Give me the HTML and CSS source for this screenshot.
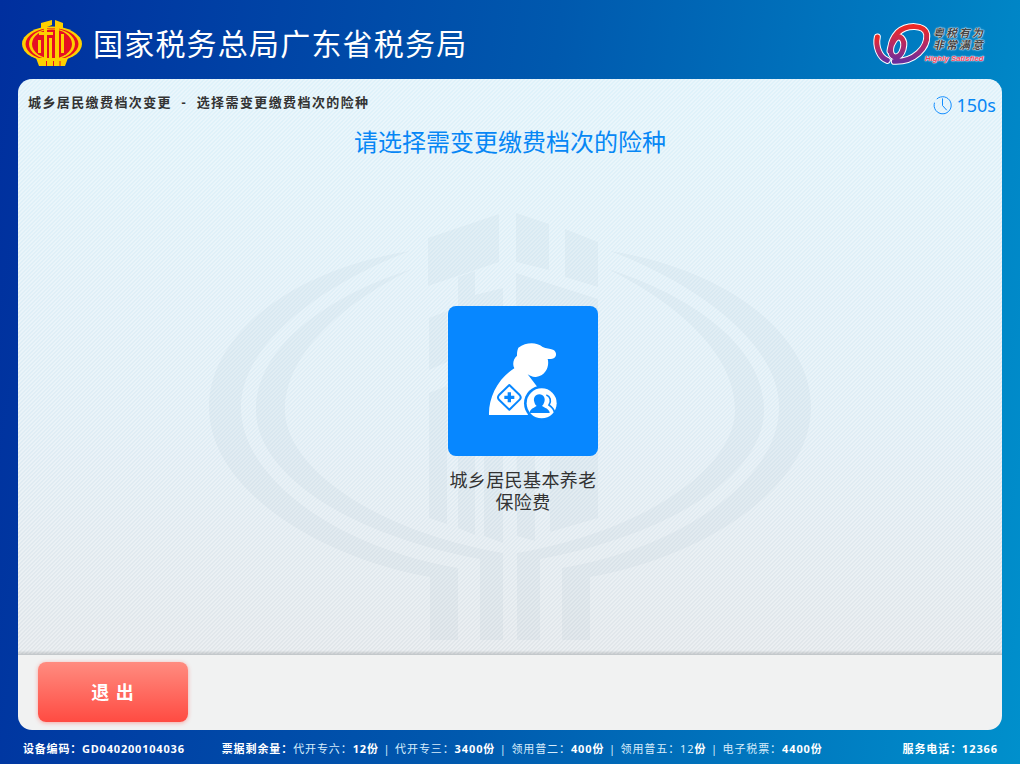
FILE: index.html
```html
<!DOCTYPE html>
<html lang="zh-CN">
<head>
    <meta charset="UTF-8">
    <title>国家税务总局广东省税务局</title>
    <link rel="stylesheet" href="styles.css">
</head>
<body>
    <div class="header">
        <svg class="emblem" viewBox="0 0 60 46">
            <ellipse cx="30" cy="24" rx="30" ry="17.5" fill="#fdd000"/>
            <ellipse cx="30" cy="24" rx="26.5" ry="16" fill="#e60f23"/>
            <ellipse cx="30" cy="24" rx="23" ry="15.5" fill="#fdd000"/>
            <ellipse cx="30" cy="24" rx="20" ry="14.5" fill="#e60f23"/>
            <path d="M14 38H46L43 46H17Z" fill="#fdd000"/>
            <path d="M19 3L30 0V5L25 7V12H31V15H25V42H22V15H17V12H22V8L19 9Z" fill="#fdd000"/>
            <path d="M33 0L41 3V9L37 8V42H33Z" fill="#fdd000"/>
            <path d="M27 18H30V42H27ZM39 14H42V33H39ZM16 20H19V33H16Z" fill="#fdd000"/>
            <path d="M24.5 41V46M31.5 41V46M38 41V46" stroke="#e60f23" stroke-width="1"/>
        </svg>
        <h1 class="org-name">国家税务总局广东省税务局</h1>
        <div class="slogan">
            <svg class="slogan-mark" viewBox="155 60 180 135">
                <defs>
                    <linearGradient id="swirl" x1="0" y1="0" x2="0" y2="1">
                        <stop offset="0" stop-color="#ee2a24"/>
                        <stop offset="0.55" stop-color="#b02a6a"/>
                        <stop offset="1" stop-color="#6a2d9c"/>
                    </linearGradient>
                </defs>
                <g fill="none" stroke="#fff" stroke-width="21" stroke-linecap="round">
                    <path d="M174 108C168 135 180 170 204 178"/>
                    <path d="M225 181C285 183 326 140 322 100C316 70 262 70 235 95C212 120 205 165 228 168C250 168 262 125 245 110C232 100 215 125 212 150"/>
                </g>
                <g fill="none" stroke="url(#swirl)" stroke-width="15" stroke-linecap="round">
                    <path d="M174 108C168 135 180 170 204 178"/>
                    <path d="M225 181C285 183 326 140 322 100C316 70 262 70 235 95C212 120 205 165 228 168C250 168 262 125 245 110C232 100 215 125 212 150"/>
                </g>
            </svg>
            <div class="slogan-text">
                <span>粤税有为</span>
                <span>非常满意</span>
                <em>Highly Satisfied</em>
            </div>
        </div>
    </div>

    <div class="panel">
        <div class="content">
            <svg class="watermark" viewBox="0 0 1020 764">
                <!-- rings -->
                <path d="M410 251C300 268 209 330 209 407C209 490 320 558 430 577V640H458V568C340 548 241 480 241 407C241 345 320 285 410 251Z"/>
                <path d="M412 269C330 295 256 345 256 410C256 475 350 535 480 559V640H503V553C370 530 285 465 285 410C285 355 340 305 412 269Z"/>
                <path d="M610 251C720 268 811 330 811 407C811 490 700 558 590 577V640H562V568C680 548 779 480 779 407C779 345 700 285 610 251Z"/>
                <path d="M608 269C690 295 764 345 764 410C764 475 670 535 540 559V640H517V553C650 530 735 465 735 410C735 355 680 305 608 269Z"/>
                <!-- character -->
                <path d="M428 238L499 214V262L428 286Z"/>
                <path d="M458 277L475 271V295L503 288V543L484 536V320L475 325V535L458 528Z"/>
                <path d="M429 393L447 386V524L429 518Z"/>
                <path d="M429 318L447 311V362L429 370Z"/>
                <path d="M516 213L549 224V270L516 262Z"/>
                <path d="M565 229L598 242V287L565 277Z"/>
                <path d="M516 273L598 299V518L550 532V456H535V541L517 536Z"/>
            </svg>
            <div class="top-row">
                <div class="crumb">城乡居民缴费档次变更&nbsp; -&nbsp; 选择需变更缴费档次的险种</div>
                <div class="timer">
                    <svg class="clock" viewBox="0 0 20 20">
                        <path d="M4 3.2A9 9 0 1 1 1.6 7" fill="none" stroke="#0787ff" stroke-width="1"/>
                        <path d="M10 2.5V10L14.5 15" fill="none" stroke="#0787ff" stroke-width="1"/>
                    </svg>
                    <span>150s</span>
                </div>
            </div>
            <h2 class="prompt">请选择需变更缴费档次的险种</h2>
            <div class="options">
                <div class="option">
                    <div class="tile">
                        <svg class="tile-icon" viewBox="0 0 255 270">
                            <path d="M112 38C135 22 165 20 185 36C196 41 206 41 216 44C230 50 228 72 210 72H200C206 92 195 122 165 126C155 127 147 122 140 118L172 160L140 240H24C22 190 50 130 100 100C94 90 96 72 108 62C108 55 108 47 112 38Z" fill="#fff"/>
                            <circle cx="182" cy="205" r="53" fill="#0787ff"/>
                            <circle cx="182" cy="205" r="45" fill="#fff"/>
                            <path d="M85 150L116 180C120 185 120 190 116 194L85 224L54 194C50 190 50 185 54 180Z" fill="none" stroke="#0787ff" stroke-width="6" stroke-linejoin="round"/>
                            <path d="M80 172H90V182H100V192H90V202H80V192H70V182H80Z" fill="#0787ff"/>
                            <path d="M175 178C188 178 194 190 190 201C188 207 186 210 183 213C190 218 206 222 206 234H146C146 222 160 218 167 213C164 210 161 207 160 201C156 190 162 178 175 178Z" fill="#0787ff"/>
                            <path d="M196 180C208 184 212 198 204 210C212 216 220 222 220 232" fill="none" stroke="#0787ff" stroke-width="5"/>
                        </svg>
                    </div>
                    <div class="option-name">城乡居民基本养老保险费</div>
                </div>
            </div>
        </div>
        <div class="actions">
            <button class="exit-btn">退 出</button>
        </div>
    </div>

    <div class="status">
        <span>设备编码：GD040200104036</span>
        <span class="stock">
            <b>票据剩余量：</b><i>代开专六：</i><b>12份</b><i class="sep">|</i><i>代开专三：</i><b>3400份</b><i class="sep">|</i><i>领用普二：</i><b>400份</b><i class="sep">|</i><i>领用普五：12</i><b>份</b><i class="sep">|</i><i>电子税票：</i><b>4400份</b>
        </span>
        <span class="hotline">服务电话：12366</span>
    </div>
</body>
</html>
```

FILE: styles.css
```css
html, body {
    margin: 0;
    height: 100%;
}

body {
    width: 1020px;
    height: 764px;
    overflow: hidden;
    display: flex;
    flex-direction: column;
    font-family: "Noto Sans", "Noto Sans CJK SC", sans-serif;
    background: linear-gradient(98deg, #002f9e 0%, #0059ae 50%, #0090cc 100%);
}

.header {
    height: 79px;
    flex: none;
    display: flex;
    align-items: center;
    padding: 0 18px 0 22px;
    box-sizing: border-box;
}

.emblem {
    width: 60px;
    height: 46px;
    flex: none;
    margin-top: 7px;
}

.org-name {
    margin: 5px 0 0 11px;
    font-size: 30px;
    font-weight: 400;
    letter-spacing: 1.2px;
    color: #fff;
}

.slogan {
    margin-left: auto;
    display: flex;
    margin-top: 7px;
    margin-right: 17px;
}

.slogan-mark {
    width: 60px;
    height: 45px;
}

.slogan-text {
    display: flex;
    flex-direction: column;
    width: 52px;
    margin: 6px 0 0 2px;
    font-family: "Liberation Sans", "Noto Sans CJK SC", sans-serif;
    font-size: 11px;
    line-height: 12.7px;
    letter-spacing: 2px;
    font-weight: 700;
    font-style: italic;
    color: #444;
    text-shadow: 0 0 1px #fff, 0 0 1px #fff, 0 0 2px #fff;
}

.slogan-text span {
    white-space: nowrap;
}

.slogan-text em {
    font-size: 7.8px;
    letter-spacing: 0;
    line-height: 13px;
    margin-left: -8px;
    white-space: nowrap;
    color: #f0405a;
}

.panel {
    height: 651px;
    margin: 0 18px;
    flex: none;
    display: flex;
    flex-direction: column;
    border-radius: 14px;
    overflow: hidden;
}

.content {
    position: relative;
    flex: 1;
    background:
        repeating-linear-gradient(135deg, rgba(255, 255, 255, 0.34) 0, rgba(255, 255, 255, 0.34) 1.414px, rgba(255, 255, 255, 0) 1.414px, rgba(255, 255, 255, 0) 2.828px),
        linear-gradient(180deg, #dff2fa 0%, #dfedf5 60%, #e1e6ea 100%);
}

.watermark {
    position: absolute;
    left: -18px;
    top: -79px;
    width: 1020px;
    height: 764px;
    fill: rgba(0, 50, 90, 0.03);
}

.top-row {
    position: relative;
    display: flex;
    justify-content: space-between;
    padding: 14px 6px 0 10px;
    height: 26px;
}

.crumb {
    font-size: 13px;
    line-height: 18px;
    font-weight: 700;
    letter-spacing: 1.4px;
    color: #333;
}

.timer {
    display: flex;
    align-items: center;
    height: 24px;
    font-size: 18px;
    color: #0787f5;
}

.clock {
    width: 19px;
    height: 19px;
    margin-right: 4px;
}

.prompt {
    position: relative;
    margin: 0;
    padding-top: 8px;
    text-align: center;
    font-size: 24px;
    line-height: 30px;
    font-weight: 400;
    color: #0787f5;
}

.options {
    position: relative;
    display: flex;
    justify-content: center;
    padding: 149px 0 0 26px;
}

.option {
    width: 150px;
}

.tile {
    height: 150px;
    border-radius: 8px;
    background: #0787ff;
    display: flex;
    align-items: center;
    justify-content: center;
}

.tile-icon {
    width: 85px;
    height: 90px;
    margin-bottom: 2px;
}

.option-name {
    margin-top: 13px;
    width: 150px;
    text-align: center;
    font-size: 18px;
    line-height: 22px;
    letter-spacing: 0.4px;
    color: #333;
}

.actions {
    height: 76px;
    flex: none;
    box-sizing: border-box;
    padding: 7px 20px;
    background: #f1f2f2;
    border-top: 1px solid #c3c8cb;
    box-shadow: 0 -2px 2px rgba(0, 0, 0, 0.12);
    position: relative;
}

.exit-btn {
    display: block;
    width: 150px;
    height: 60px;
    padding: 0 0 2px;
    border: 0;
    border-radius: 8px;
    background: linear-gradient(180deg, #ff8c80, #ff4b42);
    box-shadow: 0 1px 4px rgba(255, 80, 70, 0.45);
    color: #fff;
    font-family: inherit;
    font-size: 18px;
    font-weight: 700;
    letter-spacing: 1px;
}

.status {
    flex: 1;
    display: flex;
    align-items: center;
    padding: 1px 22px 0 23px;
    font-size: 11px;
    font-weight: 700;
    letter-spacing: 0.8px;
    color: #fff;
    white-space: nowrap;
}

.stock {
    margin-left: 37px;
    letter-spacing: 0.9px;
}

.stock b {
    font-weight: 700;
}

.stock i {
    font-style: normal;
    font-weight: 400;
    color: #d6ecfb;
}

.stock .sep {
    margin: 0 4.6px;
}

.hotline {
    margin-left: auto;
    letter-spacing: 0.9px;
}
```
